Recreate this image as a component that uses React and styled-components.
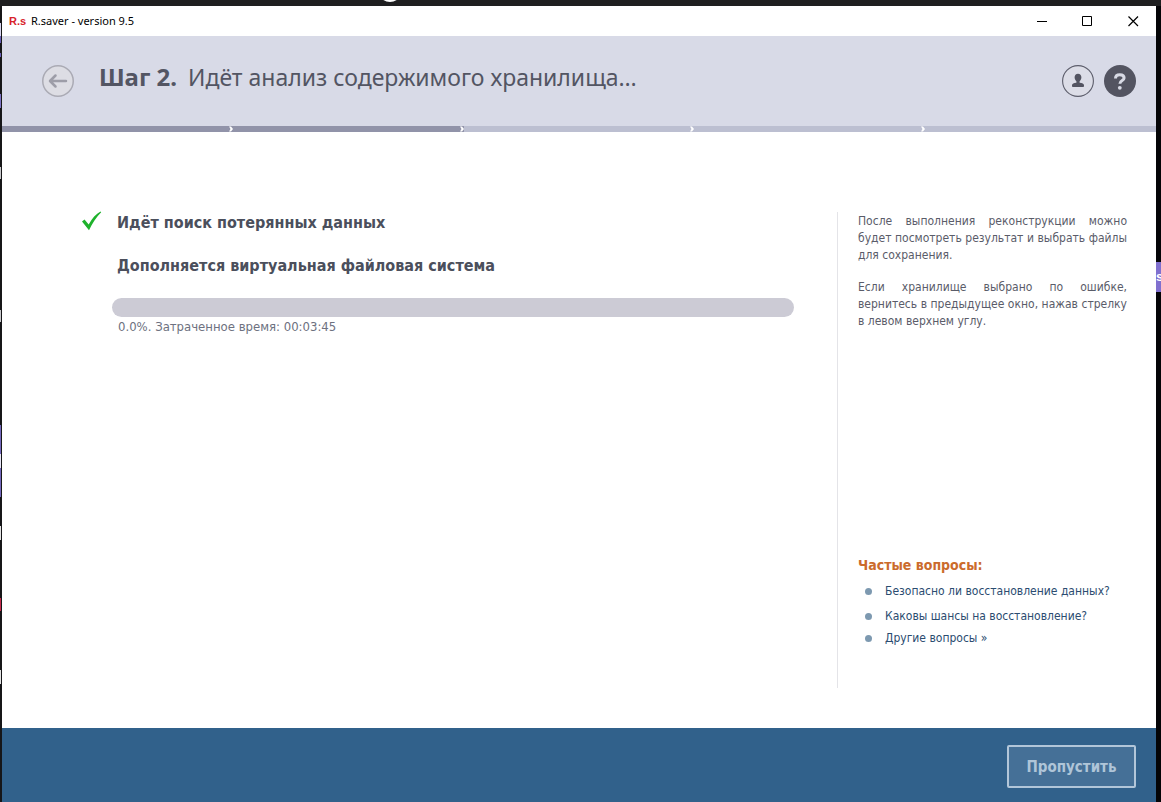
import React from "react";
import styled, { createGlobalStyle } from "styled-components";

const GlobalStyle = createGlobalStyle`
  * {
    box-sizing: border-box;
  }
  body {
    margin: 0;
    background: #101012;
    font-family: "DejaVu Sans Condensed", "DejaVu Sans", sans-serif;
    font-size: 12px;
    line-height: 17px;
    color: #5a5c69;
  }
  h1, h2, h3, p, ul {
    margin: 0;
    padding: 0;
  }
`;

const Desktop = styled.div`
  position: relative;
  min-height: 100vh;
  display: flex;
  padding: 6px 5px 0 2px;
  background: linear-gradient(#1f1f20 6px, transparent 6px),
    linear-gradient(90deg, #161618 50%, #050507 50%);
  overflow: hidden;
`;

const Sliver = styled.span`
  position: absolute;
  top: ${(props) => props.$top}px;
  ${(props) => props.$side || "left"}: 0;
  width: ${(props) => props.$width || 1}px;
  height: ${(props) => props.$height}px;
  background: ${(props) => props.$color};
  color: #fff;
  font: bold 13px/30px "Liberation Sans", sans-serif;
  overflow: hidden;
`;

const TopBlob = styled.span`
  position: absolute;
  top: -22px;
  left: 378px;
  width: 24px;
  height: 24px;
  border-radius: 50%;
  background: #fff;
`;

const Window = styled.div`
  flex: 1;
  position: relative;
  display: flex;
  flex-direction: column;
  background: #fff;
`;

const TitleBar = styled.div`
  height: 30px;
  display: flex;
  align-items: center;
  padding-left: 7px;
  color: #000;
  font-family: "Noto Sans", "Open Sans", sans-serif;
  font-size: 11px;
`;

const AppLogo = styled.span`
  width: 22px;
  color: #d8232a;
  font: bold 11px/16px "Liberation Sans", sans-serif;
`;

const AppTitle = styled.span`
  flex: 1;
  padding-bottom: 2px;
`;

const WindowButton = styled.button`
  width: 46px;
  height: 30px;
  padding: 0;
  border: 0;
  background: none;
  display: flex;
  align-items: center;
  justify-content: center;
`;

const Header = styled.header`
  height: 90px;
  display: flex;
  align-items: center;
  gap: 10px;
  padding: 0 20px 0 40px;
  background: #d8dae7;
`;

const StepTitle = styled.h1`
  flex: 1;
  padding: 0 0 8px 15px;
  color: #535563;
  font-family: "Noto Sans", "Open Sans", sans-serif;
  font-size: 23px;
  line-height: 32px;
  font-weight: normal;

  b {
    margin-right: 11px;
    font-size: 24px;
  }
`;

const RoundButton = styled.button`
  width: 32px;
  height: 32px;
  padding: 0;
  border: 0;
  background: none;
  display: block;

  svg {
    display: block;
  }
`;

const Steps = styled.div`
  display: flex;
  height: 6px;
  background: #bcc0d1;
`;

const Step = styled.span`
  flex: 1;
  display: flex;
  justify-content: flex-end;
  background: ${(props) => (props.$done ? "#9193a9" : "#bcbfd1")};
`;

const Content = styled.main`
  flex: 1;
  display: flex;
  padding: 80px 29px 40px 78px;
`;

const Progress = styled.section`
  flex: 1;
  padding-right: 43px;
`;

const TaskRow = styled.div`
  display: flex;
  align-items: center;
  height: 22px;
  margin-bottom: 21px;
`;

const TaskIcon = styled.span`
  width: 37px;
  display: flex;
  padding-bottom: 4px;
`;

const TaskName = styled.h2`
  color: #4b4f5c;
  font-size: 16px;
  line-height: 22px;
`;

const Track = styled.div`
  height: 19px;
  margin-left: 32px;
  border-radius: 10px;
  background: #cccbd5;
  overflow: hidden;
`;

const Fill = styled.div`
  height: 100%;
  background: #9193a9;
`;

const Elapsed = styled.p`
  padding: 1px 0 0 38px;
  color: #6d7180;
  font-size: 13px;
`;

const Side = styled.aside`
  width: 290px;
  display: flex;
  flex-direction: column;
  justify-content: space-between;
  padding: 1px 0 41px 20px;
  border-left: 1px solid #e4e4e8;
`;

const Hint = styled.p`
  margin-bottom: 15px;
  text-align: justify;
`;

const FaqTitle = styled.h3`
  margin-bottom: 9px;
  color: #cb6b2c;
  font-size: 14px;
  line-height: 18px;
`;

const FaqList = styled.ul`
  list-style: none;
`;

const FaqItem = styled.li`
  display: flex;
  align-items: center;
  gap: 13px;
  padding-left: 7px;
  margin-bottom: 8px;

  &::before {
    content: "";
    width: 7px;
    height: 7px;
    border-radius: 50%;
    background: #7d99b0;
  }

  &:nth-child(2) {
    margin-bottom: 5px;
  }

  &:last-child {
    margin-bottom: 0;
  }

  a {
    color: #2b4c70;
    text-decoration: none;
    white-space: nowrap;
  }
`;

const Footer = styled.footer`
  height: 74px;
  display: flex;
  justify-content: flex-end;
  padding: 17px 20px 14px;
  background: #31618b;
`;

const SkipButton = styled.button`
  width: 129px;
  height: 43px;
  border: 2px solid #b2c6d9;
  border-radius: 2px;
  background: #457097;
  color: #afc5d8;
  font: bold 15px "DejaVu Sans Condensed", "DejaVu Sans", sans-serif;
`;

const slivers = [
  { top: 23, height: 13, color: "#d9d6ef" },
  { top: 36, height: 7, color: "#6a5fb8" },
  { top: 53, height: 4, color: "#6a5fb8" },
  { top: 94, height: 14, color: "#7d72c4" },
  { top: 167, height: 12, color: "#c9c9cc" },
  { top: 310, height: 12, color: "#c9c9cc" },
  { top: 425, height: 72, color: "#7468bd" },
  { top: 454, height: 14, color: "#e8e6f6" },
  { top: 526, height: 14, color: "#e4e4e4" },
  { top: 598, height: 13, color: "#c42a4c" },
  { top: 670, height: 14, color: "#e4e4e4" },
];

const questions = [
  "Безопасно ли восстановление данных?",
  "Каковы шансы на восстановление?",
  "Другие вопросы »",
];

export default function App() {
  const percent = 0;

  return (
    <Desktop>
      <GlobalStyle />
      <TopBlob />
      {slivers.map((s) => (
        <Sliver key={s.top} $top={s.top} $height={s.height} $color={s.color} />
      ))}
      <Sliver $side="right" $top={262} $width={5} $height={30} $color="#8070cf">
        s
      </Sliver>
      <Window>
        <TitleBar>
          <AppLogo>R.s</AppLogo>
          <AppTitle>R.saver - version 9.5</AppTitle>
          <WindowButton aria-label="Свернуть">
            <svg width="11" height="11" stroke="#000">
              <path d="M1 5.5h10" />
            </svg>
          </WindowButton>
          <WindowButton aria-label="Развернуть">
            <svg width="11" height="11" stroke="#000" fill="none">
              <path d="M.5 .5h9v9h-9z" />
            </svg>
          </WindowButton>
          <WindowButton aria-label="Закрыть">
            <svg width="11" height="11" stroke="#000" strokeWidth="1.2">
              <path d="M.5 .5l9.500 9.500M10 .5L.5 10" />
            </svg>
          </WindowButton>
        </TitleBar>
        <Header>
          <RoundButton aria-label="Назад">
            <svg width="32" height="32" fill="none" stroke="#aaaab4">
              <circle cx="16" cy="16" r="15.25" fill="#dddde4" strokeWidth="1.5" />
              <path
                d="M24 16H8.500M13.500 10.500L8 16l5.500 5.500"
                stroke="#9d9da8"
                strokeWidth="2.5"
                strokeLinecap="round"
                strokeLinejoin="round"
              />
            </svg>
          </RoundButton>
          <StepTitle>
            <b>Шаг 2.</b>
            Идёт анализ содержимого хранилища…
          </StepTitle>
          <RoundButton aria-label="Профиль">
            <svg width="32" height="32">
              <circle cx="16" cy="16" r="15.4" fill="#dcdde7" stroke="#5c5d6b" strokeWidth="1.1" />
              <path
                fill="#535461"
                d="M16 8.700c2.100 0 3.400 1.500 3.400 3.600 0 1.700-.8 3-1.800 3.900v1.500c2.600.3 4.400 1 4.400 2.600v.7c0 .6-.5 1-1.200 1h-9.600c-.7 0-1.200-.4-1.200-1v-.7c0-1.600 1.800-2.300 4.400-2.600v-1.500c-1-.9-1.800-2.200-1.800-3.900 0-2.100 1.300-3.600 3.400-3.600z"
              />
            </svg>
          </RoundButton>
          <RoundButton aria-label="Справка">
            <svg width="32" height="32" fill="none">
              <circle cx="16" cy="16" r="16" fill="#535461" />
              <path
                d="M11.500 13.400c0-2.500 1.900-3.700 4.300-3.700s4.300 1.200 4.300 3.200c0 2.900-4.200 2.400-4.200 5.900"
                stroke="#d8dae5"
                strokeWidth="3"
              />
              <circle cx="15.800" cy="22.800" r="1.900" fill="#d8dae5" />
            </svg>
          </RoundButton>
        </Header>
        <Steps>
          {[1, 2, 3, 4, 5].map((n) => (
            <Step key={n} $done={n <= 2}>
              {n < 5 && (
                <svg width="4" height="6" fill="#fff">
                  <path d="M0 .5h2L4 3 2 5.500H0L1.500 3z" />
                </svg>
              )}
            </Step>
          ))}
        </Steps>
        <Content>
          <Progress>
            <TaskRow>
              <TaskIcon>
                <svg width="24" height="20" fill="#1eb22c">
                  <path d="M2 10.500l2.500-2 4.200 5C12 7.500 16 3 20.500.6l.7.6C16.500 6 12.500 12 9 19.200z" />
                </svg>
              </TaskIcon>
              <TaskName>Идёт поиск потерянных данных</TaskName>
            </TaskRow>
            <TaskRow>
              <TaskIcon />
              <TaskName>Дополняется виртуальная файловая система</TaskName>
            </TaskRow>
            <Track role="progressbar" aria-label="Ход выполнения" aria-valuenow={percent}>
              <Fill style={{ width: `${percent}%` }} />
            </Track>
            <Elapsed>{percent.toFixed(1)}%. Затраченное время: 00:03:45</Elapsed>
          </Progress>
          <Side>
            <div>
              <Hint>
                После выполнения реконструкции можно будет посмотреть результат
                и выбрать файлы для сохранения.
              </Hint>
              <Hint>
                Если хранилище выбрано по ошибке, вернитесь в предыдущее окно,
                нажав стрелку в левом верхнем углу.
              </Hint>
            </div>
            <div>
              <FaqTitle>Частые вопросы:</FaqTitle>
              <FaqList>
                {questions.map((q) => (
                  <FaqItem key={q}>
                    <a href="#faq">{q}</a>
                  </FaqItem>
                ))}
              </FaqList>
            </div>
          </Side>
        </Content>
        <Footer>
          <SkipButton>Пропустить</SkipButton>
        </Footer>
      </Window>
    </Desktop>
  );
}
